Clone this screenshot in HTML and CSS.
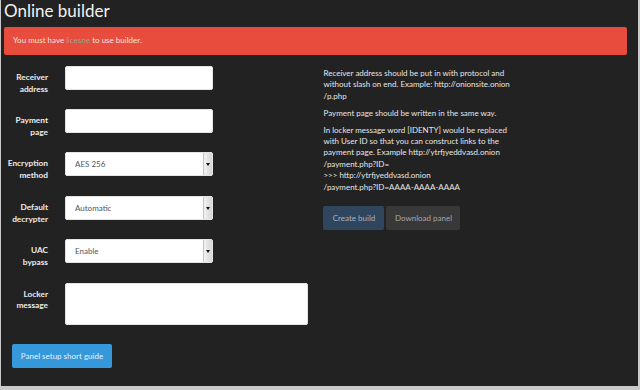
FILE: index.html
```html
<!DOCTYPE html>
<html lang="en">
<head>
    <meta charset="UTF-8">
    <title>Online builder</title>
    <link rel="stylesheet" href="styles.css">
</head>
<body>
    <div class="window">
        <div class="container">
            <h2 class="page-title">Online builder</h2>
            <div class="alert">You must have <a href="#" class="alert-link">licesne</a> to use builder.</div>

            <div class="row">
                <!-- Build form -->
                <div class="col-form">
                    <form class="form-horizontal">
                        <div class="form-group">
                            <label class="control-label">Receiver<br>address</label>
                            <div class="control"><input type="text" class="form-control"></div>
                        </div>
                        <div class="form-group">
                            <label class="control-label">Payment<br>page</label>
                            <div class="control"><input type="text" class="form-control"></div>
                        </div>
                        <div class="form-group">
                            <label class="control-label">Encryption<br>method</label>
                            <div class="control">
                                <div class="select-wrap">
                                    <select class="form-control"><option>AES 256</option></select>
                                    <span class="select-btn"></span>
                                </div>
                            </div>
                        </div>
                        <div class="form-group">
                            <label class="control-label">Default<br>decrypter</label>
                            <div class="control">
                                <div class="select-wrap">
                                    <select class="form-control"><option>Automatic</option></select>
                                    <span class="select-btn"></span>
                                </div>
                            </div>
                        </div>
                        <div class="form-group">
                            <label class="control-label">UAC<br>bypass</label>
                            <div class="control">
                                <div class="select-wrap">
                                    <select class="form-control"><option>Enable</option></select>
                                    <span class="select-btn"></span>
                                </div>
                            </div>
                        </div>
                        <div class="form-group">
                            <label class="control-label">Locker<br>message</label>
                            <div class="control wide"><textarea class="form-control"></textarea></div>
                        </div>
                    </form>
                    <button class="btn btn-info">Panel setup short guide</button>
                </div>

                <!-- Help text -->
                <div class="col-help">
                    <p>Receiver address should be put in with protocol and<br>without slash on end. Example: http://onionsite.onion<br>/p.php</p>
                    <p>Payment page should be written in the same way.</p>
                    <p>In locker message word [IDENTY] would be replaced<br>with User ID so that you can construct links to the<br>payment page. Example http://ytrfjyeddvasd.onion<br>/payment.php?ID=<br>&gt;&gt;&gt; http://ytrfjyeddvasd.onion<br>/payment.php?ID=AAAA-AAAA-AAAA</p>
                    <div class="actions">
                        <button class="btn btn-primary" disabled>Create build</button>
                        <button class="btn btn-default" disabled>Download panel</button>
                    </div>
                </div>
            </div>
        </div>
    </div>
</body>
</html>
```

FILE: styles.css
```css
:root {
    --page-bg: #222222;
    --text-color: #ffffff;
    --danger: #e74c3c;
    --info: #3498db;
    --primary: #375a7f;
    --gray: #444444;
}

* {
    box-sizing: border-box;
    margin: 0;
    padding: 0;
}

body {
    background-color: #c9c9c9;
    font-family: 'Lato', 'Open Sans', sans-serif;
    font-size: 8px;
    line-height: 1.4286;
    color: var(--text-color);
}

.window {
    width: 637px;
    height: 386px;
    margin-left: 1px;
    background-color: var(--page-bg);
    overflow: hidden;
}

.container {
    padding: 2px 11px 0 3px;
}

.page-title {
    font-size: 17px;
    font-weight: 400;
    line-height: 1.1;
    margin-bottom: 6px;
    color: #f2f2f2;
}

.alert {
    background-color: var(--danger);
    color: #f4e4e2;
    padding: 8px 9px;
    border-radius: 2px;
    margin-bottom: 11px;
    height: 28px;
}

.alert-link {
    color: #74b68e;
    text-decoration: none;
}

.row {
    display: flex;
}

.col-form {
    width: 312px;
}

.col-help {
    width: 312px;
    padding: 2px 8px 0 8px;
}

.form-group {
    display: flex;
    height: 43.4px;
}

.control-label {
    width: 52px;
    padding: 6px 8px 0 0;
    text-align: right;
    font-size: 8.3px;
    font-weight: 700;
    color: #ececec;
}

.control {
    padding-left: 9px;
}

.control.wide {
    width: 252px;
}

.form-control {
    display: block;
    width: 148px;
    height: 24px;
    border: 1px solid #e4e4e4;
    border-radius: 2px;
    background-color: #ffffff;
    font-family: inherit;
    font-size: 8px;
    color: #555555;
    padding: 0 9px;
}

textarea.form-control {
    width: 243px;
    height: 42px;
    resize: none;
}

.select-wrap {
    position: relative;
    width: 148px;
}

select.form-control {
    appearance: none;
    -webkit-appearance: none;
}

.select-btn {
    position: absolute;
    top: 1px;
    right: 1px;
    width: 9px;
    height: 22px;
    border-left: 1px solid #c4c4c4;
    background: linear-gradient(to right, #f2f2f2, #d6d6d6);
}

.select-btn::after {
    content: '';
    position: absolute;
    left: 2px;
    top: 10px;
    border-left: 2px solid transparent;
    border-right: 2px solid transparent;
    border-top: 3px solid #111111;
}

.col-form .btn {
    margin: 18px 0 0 8px;
}

.btn {
    height: 24px;
    padding: 0 8px;
    border: none;
    border-radius: 2px;
    font-family: inherit;
    font-size: 8px;
    color: #ffffff;
}

.btn-info {
    background-color: var(--info);
    color: #e6f1fa;
    width: 100px;
}

.btn-primary {
    background-color: #2f465e;
    color: #a9b3bd;
    width: 61px;
}

.btn-default {
    background-color: #383838;
    color: #a6a6a6;
    width: 74px;
    margin-left: 2px;
}

.col-help p {
    color: #e6e6e6;
    margin-bottom: 5.6px;
}

.actions {
    display: flex;
    margin-top: 13px;
}
```
